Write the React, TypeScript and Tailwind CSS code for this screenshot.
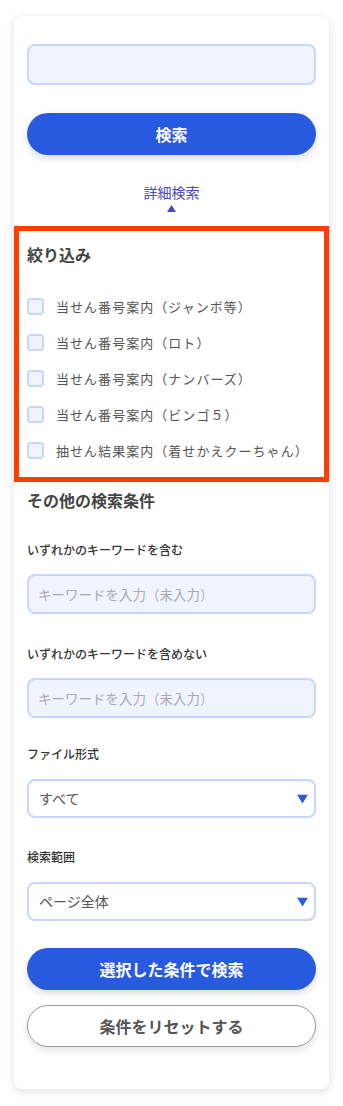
import React from "react";

const font = { fontFamily: '"Noto Sans CJK JP", "Noto Sans", sans-serif' };

const filters = [
  "当せん番号案内（ジャンボ等）",
  "当せん番号案内（ロト）",
  "当せん番号案内（ナンバーズ）",
  "当せん番号案内（ビンゴ５）",
  "抽せん結果案内（着せかえクーちゃん）",
];

const Caret = () => (
  <svg className="absolute right-[6px] top-1/2 -translate-y-1/2" width="11" height="9" viewBox="0 0 11 9">
    <path d="M0 0 H11 L5.5 9 Z" fill="#2a5ae0" />
  </svg>
);

const Select: React.FC<{ value: string }> = ({ value }) => (
  <div className="relative mt-[17px] flex h-[39px] items-center rounded-lg border-2 border-[#c6d6ff] bg-white pl-[10px] text-[14px] text-[#555]">
    {value}
    <Caret />
  </div>
);

const KeywordInput = () => (
  <div className="mt-[16px] flex h-[40px] items-center rounded-lg border-2 border-[#c6d6ff] bg-[#eff4ff] pl-[9px] text-[13.5px] text-[#aaa]">
    キーワードを入力（未入力）
  </div>
);

const FieldLabel: React.FC<{ children: React.ReactNode; className?: string }> = ({ children, className }) => (
  <div className={"text-[12px] font-medium leading-[16px] text-[#333] " + (className ?? "")}>{children}</div>
);

export default function App() {
  return (
    <div className="min-h-[1106px] bg-white pt-4 pb-4" style={font}>
      <div className="mx-[14px] w-[315px] rounded-lg bg-white pb-[42px] shadow-[0_2px_10px_rgba(0,0,0,0.13)]">
        <div className="px-[13px] pt-[28px]">
          <div className="h-[41px] rounded-lg border-2 border-[#c6d6ff] bg-[#eff4ff]" />
          <button className="mt-[28px] flex h-[42px] w-full items-center justify-center rounded-full bg-[#285ae0] text-[16px] font-bold text-white shadow-[0_3px_8px_rgba(0,0,0,0.15)]">
            検索
          </button>
          <div className="mt-[28px] flex flex-col items-center text-[14px] leading-[18px] text-[#4848c0]">
            <span>詳細検索</span>
            <svg width="9" height="7" viewBox="0 0 9 7" className="mt-[4px]">
              <path d="M4.5 0 L9 7 H0 Z" fill="#4848c0" />
            </svg>
          </div>
        </div>

        <div className="mt-[14px] border-[5px] border-[#ff3d00] px-2 pt-[13px] pb-[18px]">
          <div className="text-[16px] font-bold leading-[20px] text-[#444]">絞り込み</div>
          <div className="mt-[34px] flex flex-col gap-[19px]">
            {filters.map((f) => (
              <label key={f} className="flex h-[17px] items-center gap-[12px] text-[13px] text-[#555]">
                <span className="h-[17px] w-[17px] shrink-0 rounded-[4px] border-2 border-[#c6d6ff] bg-[#eff4ff]" />
                <span className="tracking-[0.08em]">{f}</span>
              </label>
            ))}
          </div>
        </div>

        <div className="px-[13px]">
          <div className="mt-[8px] text-[16px] font-bold leading-[20px] text-[#444]">その他の検索条件</div>

          <FieldLabel className="mt-[32px]">いずれかのキーワードを含む</FieldLabel>
          <KeywordInput />

          <FieldLabel className="mt-[32px]">いずれかのキーワードを含めない</FieldLabel>
          <KeywordInput />

          <FieldLabel className="mt-[28px]">ファイル形式</FieldLabel>
          <Select value="すべて" />

          <FieldLabel className="mt-[31px]">検索範囲</FieldLabel>
          <Select value="ページ全体" />

          <button className="mt-[27px] flex h-[42px] w-full items-center justify-center rounded-full bg-[#285ae0] text-[16px] font-bold text-white shadow-[0_3px_8px_rgba(0,0,0,0.15)]">
            選択した条件で検索
          </button>
          <button className="mt-[15px] flex h-[42px] w-full items-center justify-center rounded-full border border-[#999] bg-white text-[16px] font-bold text-[#555] shadow-[0_3px_8px_rgba(0,0,0,0.12)]">
            条件をリセットする
          </button>
        </div>
      </div>
    </div>
  );
}
